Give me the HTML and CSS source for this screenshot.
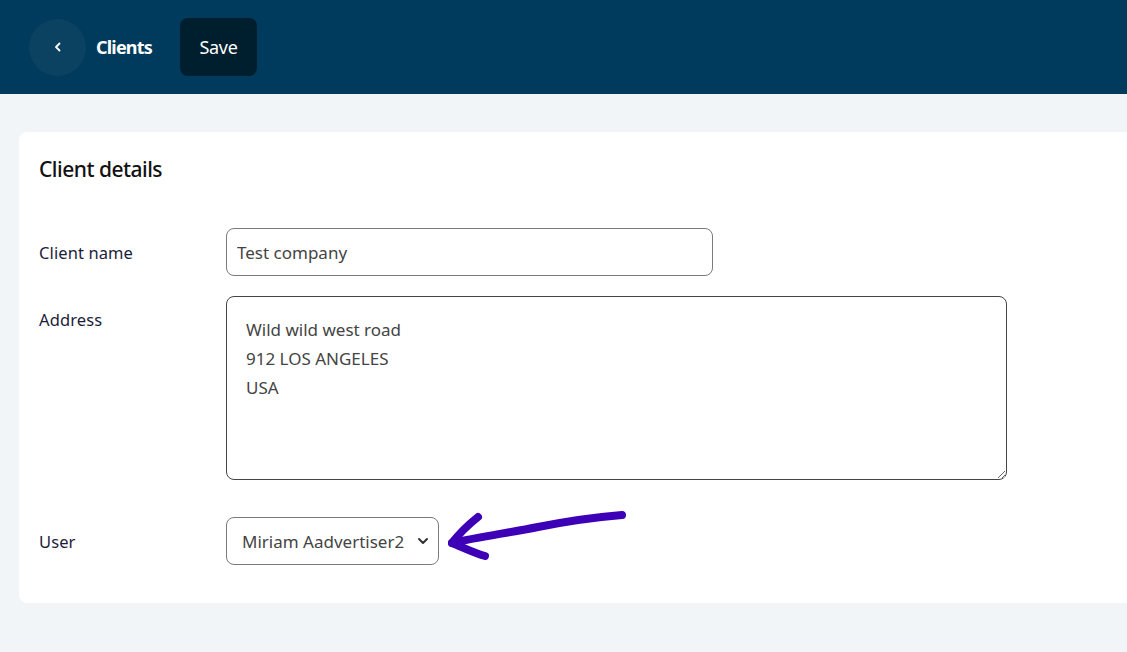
FILE: index.html
```html
<!DOCTYPE html>
<html lang="en">
<head>
<meta charset="utf-8">
<title>Clients</title>
<link rel="stylesheet" href="styles.css">
</head>
<body>
<header class="topbar">
  <button class="back" aria-label="Back">
    <svg width="12" height="12" viewBox="0 0 12 12"><path d="M7.5 2.5 L4 6 L7.5 9.5" fill="none" stroke="#fff" stroke-width="1.8" stroke-linecap="round" stroke-linejoin="round"/></svg>
  </button>
  <span class="title">Clients</span>
  <button class="save">Save</button>
</header>
<main class="content">
  <section class="card">
    <h2 class="card-title">Client details</h2>
    <div class="row">
      <label class="label">Client name</label>
      <input class="field name" type="text" value="Test company">
    </div>
    <div class="row top">
      <label class="label">Address</label>
      <textarea class="field address">Wild wild west road
912 LOS ANGELES
USA</textarea>
    </div>
    <div class="row">
      <label class="label">User</label>
      <div class="select-wrap">
        <div class="field select">
          <span>Miriam Aadvertiser2</span>
          <svg width="12" height="8" viewBox="0 0 12 8"><path d="M2 2 L6 6 L10 2" fill="none" stroke="#333" stroke-width="2" stroke-linecap="round" stroke-linejoin="round"/></svg>
        </div>
        <svg class="arrow" width="200" height="70" viewBox="0 0 200 70">
          <path d="M174 6 C150 8 120 12 90 18 C60 24 30 28 4 34" fill="none" stroke="#3d00b6" stroke-width="8" stroke-linecap="round"/>
          <path d="M30 8 C20 16 10 26 4 34 C14 38 26 44 37 47" fill="none" stroke="#3d00b6" stroke-width="8" stroke-linecap="round" stroke-linejoin="round"/>
        </svg>
      </div>
    </div>
  </section>
</main>
</body>
</html>
```
FILE: styles.css
```css
* { box-sizing: border-box; }
html, body { margin: 0; padding: 0; }
body {
  background: #f1f5f8;
  font-family: "Noto Sans", "Open Sans", sans-serif;
  height: 652px;
  overflow: hidden;
}
.topbar {
  height: 94px;
  background: #003a5c;
  display: flex;
  align-items: center;
  padding-left: 29px;
}
.back {
  width: 57px;
  height: 57px;
  border-radius: 50%;
  border: none;
  background: #0b4161;
  display: flex;
  align-items: center;
  justify-content: center;
  padding: 0;
  margin-right: 10px;
}
.title {
  color: #fff;
  font-weight: 700;
  font-size: 18px;
  letter-spacing: -0.8px;
  margin-right: 28px;
}
.save {
  width: 77px;
  height: 58px;
  border: none;
  border-radius: 8px;
  background: #001f2e;
  color: #fff;
  font-family: inherit;
  font-size: 18px;
  letter-spacing: -0.3px;
}
.content {
  padding: 38px 0 0 19px;
}
.card {
  background: #fff;
  border-radius: 8px 0 0 8px;
  height: 471px;
  padding: 22px 20px;
}
.card-title {
  margin: 0 0 44px;
  font-size: 21px;
  font-weight: 500;
  color: #111;
  letter-spacing: -0.5px;
  line-height: 30px;
}
.row {
  display: flex;
  align-items: center;
  margin-bottom: 20px;
}
.row.top { align-items: flex-start; margin-bottom: 37px; }
.row.top .label { padding-top: 12px; }
.label {
  width: 187px;
  font-size: 16.5px;
  color: #1b1d3a;
  letter-spacing: 0.1px;
}
.field {
  border: 1px solid #7a7a7a;
  border-radius: 8px;
  font-family: inherit;
  font-size: 17px;
  color: #444;
  letter-spacing: 0;
  background: #fff;
}
.name {
  width: 487px;
  height: 48px;
  padding: 0 10px;
}
.address {
  width: 781px;
  height: 184px;
  padding: 18px 19px;
  line-height: 29px;
  resize: both;
  border-color: #444;
}
.select-wrap { position: relative; }
.select {
  width: 213px;
  height: 48px;
  padding: 0 9px 0 15px;
  display: flex;
  align-items: center;
  justify-content: space-between;
}
.arrow {
  position: absolute;
  left: 222px;
  top: -8px;
}
```
